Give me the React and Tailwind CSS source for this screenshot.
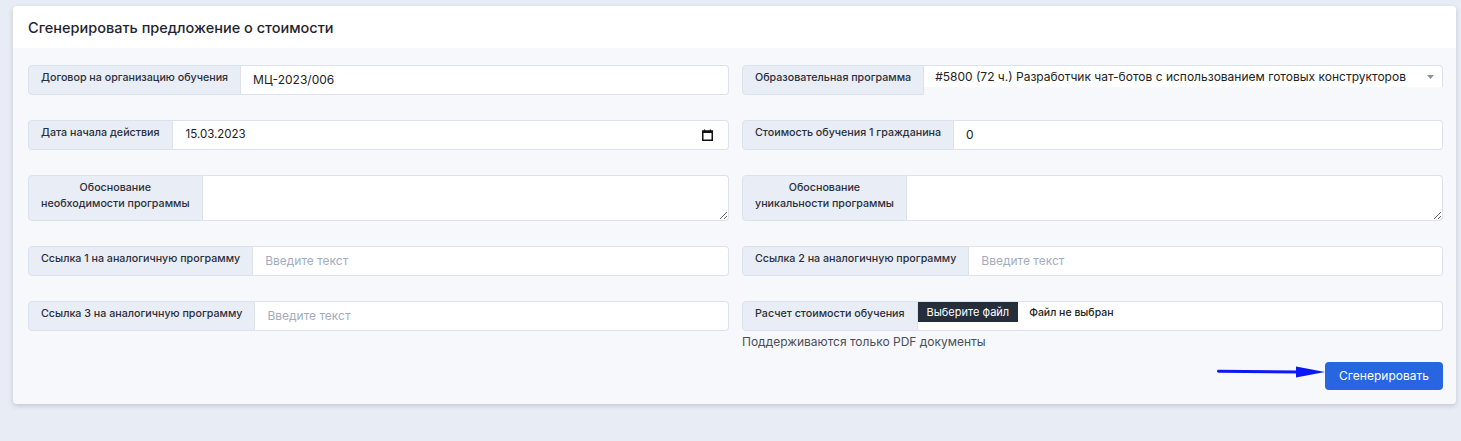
import React from 'react'

const font = { fontFamily: 'Inter, "Noto Sans", sans-serif' }

function Label({ children, center }) {
  return (
    <div
      className={`shrink-0 bg-[#e9edf5] border border-[#dbe2ee] rounded-l-[4px] px-3 pt-[4px] text-[10.7px] leading-[16px] font-medium text-[#2a2f3a] whitespace-nowrap ${center ? 'text-center' : ''}`}
    >
      {children}
    </div>
  )
}

function TextRow({ label, value, placeholder }) {
  return (
    <div className="flex h-[30px]">
      <Label>{label}</Label>
      <input
        readOnly
        defaultValue={value}
        placeholder={placeholder}
        className="flex-1 min-w-0 bg-white border border-l-0 border-[#dbe2ee] rounded-r-[4px] px-3 text-[12px] text-[#222] placeholder:text-[#a3adbf] outline-none"
      />
    </div>
  )
}

function AreaRow({ label }) {
  return (
    <div className="flex h-[46px]">
      <Label center>{label}</Label>
      <textarea
        readOnly
        className="flex-1 min-w-0 bg-white border border-l-0 border-[#dbe2ee] rounded-r-[4px] px-3 py-1 text-[12px] outline-none"
      />
    </div>
  )
}

function CalendarIcon() {
  return (
    <svg width="11" height="12" viewBox="0 0 11 12" fill="none">
      <rect x="0.75" y="2" width="9.5" height="9.25" stroke="#111" strokeWidth="1.5" />
      <rect x="0.75" y="2" width="9.5" height="2" fill="#111" />
      <rect x="2" y="0.5" width="1.2" height="2" fill="#111" />
      <rect x="7.8" y="0.5" width="1.2" height="2" fill="#111" />
    </svg>
  )
}

export default function App() {
  return (
    <div style={font} className="w-[1461px] h-[441px] bg-[#e8ecf4] pt-[6px] pl-[13px] pr-[5px]">
      <div className="bg-[#f7f8fc] rounded-[4px] shadow-[0_2px_5px_rgba(30,40,70,0.18)] overflow-hidden">
        <div className="bg-white h-[42px] flex items-center px-[15px] pt-[2px]">
          <h1 className="text-[14.5px] font-medium text-[#1f2430]">Сгенерировать предложение о стоимости</h1>
        </div>

        <div className="pl-[15px] pr-[13px] pt-[17px] pb-[14px]">
          <div className="grid grid-cols-2 gap-x-[13px] gap-y-[25px]">
            <TextRow label="Договор на организацию обучения" value="МЦ-2023/006" />

            <div className="flex h-[30px]">
              <Label>Образовательная программа</Label>
              <div className="flex-1 min-w-0 self-start h-[22px] bg-white border-t border-r border-[#dbe2ee] rounded-tr-[4px] flex items-center pl-[11px] pr-[8px]">
                <span className="flex-1 text-[12px] text-[#222] truncate">
                  #5800 (72 ч.) Разработчик чат-ботов с использованием готовых конструкторов
                </span>
                <svg width="7" height="4" viewBox="0 0 7 4" className="ml-2">
                  <polygon points="0,0 7,0 3.5,4" fill="#8a8f99" />
                </svg>
              </div>
            </div>

            <div className="flex h-[30px]">
              <Label>Дата начала действия</Label>
              <div className="flex-1 min-w-0 bg-white border border-l-0 border-[#dbe2ee] rounded-r-[4px] flex items-center pl-[13px] pr-[15px]">
                <span className="flex-1 text-[11.5px] text-[#222]">15.03.2023</span>
                <CalendarIcon />
              </div>
            </div>

            <TextRow label="Стоимость обучения 1 гражданина" value="0" />

            <AreaRow label={<>Обоснование<br />необходимости программы</>} />
            <AreaRow label={<>Обоснование<br />уникальности программы</>} />

            <TextRow label="Ссылка 1 на аналогичную программу" placeholder="Введите текст" />
            <TextRow label="Ссылка 2 на аналогичную программу" placeholder="Введите текст" />

            <TextRow label="Ссылка 3 на аналогичную программу" placeholder="Введите текст" />

            <div>
              <div className="flex h-[30px]">
                <Label>Расчет стоимости обучения</Label>
                <div className="flex-1 min-w-0 bg-white border border-l-0 border-[#dbe2ee] rounded-r-[4px] flex items-start">
                  <span className="bg-[#262d3b] text-white text-[11px] h-[20px] flex items-center px-[9px]">Выберите файл</span>
                  <span className="ml-[11px] mt-[3px] text-[10.5px] font-medium text-[#222]">Файл не выбран</span>
                </div>
              </div>
              <p className="mt-[3px] text-[12px] leading-[16px] text-[#4a4f59]">Поддерживаются только PDF документы</p>
            </div>
          </div>

          <div className="flex justify-end items-start mt-[12px]">
            <svg width="108" height="14" viewBox="0 0 108 14" className="mt-[3px]">
              <line x1="1.5" y1="6.2" x2="82" y2="7" stroke="#0b17f5" strokeWidth="3" strokeLinecap="round" />
              <polygon points="79,1.5 108,7 79,12.5" fill="#0b17f5" />
            </svg>
            <button className="h-[28px] w-[118px] bg-[#2866e1] text-white text-[12px] rounded-[4px]">
              Сгенерировать
            </button>
          </div>
        </div>
      </div>
    </div>
  )
}
